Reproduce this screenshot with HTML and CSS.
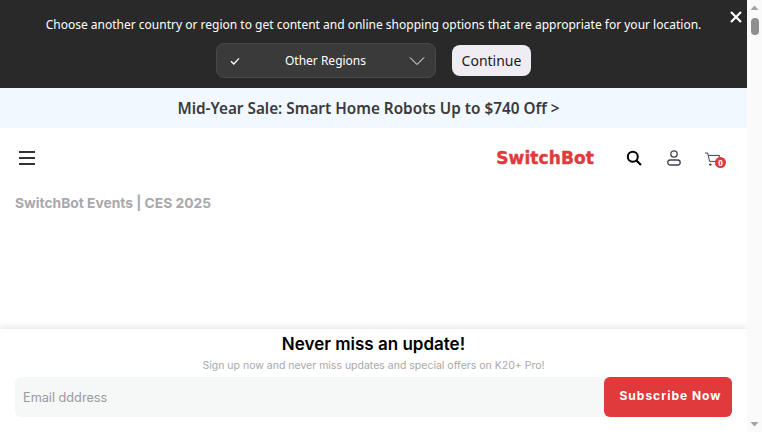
FILE: index.html
```html
<!DOCTYPE html>
<html>
<head>
<title>SwitchBot Events</title>
<link rel="stylesheet" href="styles.css">
</head>
<body>
  <div id="page">
    <div class="region-bar">
      <p class="region-text">Choose another country or region to get content and online shopping options that are appropriate for your location.</p>
      <div class="region-row">
        <div class="region-select">
          <svg class="tick" width="12" height="12" viewBox="0 0 12 12"><path d="M2 6.2l2.8 2.8L10 3.4" fill="none" stroke="#fff" stroke-width="1.3"/></svg>
          <span class="region-name">Other Regions</span>
          <svg class="chev" width="16" height="10" viewBox="0 0 16 10"><path d="M1 1.5l7 7 7-7" fill="none" stroke="#fff" stroke-width="1"/></svg>
        </div>
        <button class="continue">Continue</button>
      </div>
      <svg class="close" width="12" height="12" viewBox="0 0 12 12"><path d="M1 1l10 10M11 1L1 11" stroke="#fff" stroke-width="2.2"/></svg>
    </div>
    <div class="promo">Mid-Year Sale: Smart Home Robots Up to $740 Off &gt;</div>
    <header class="nav">
      <svg class="burger" width="16" height="14" viewBox="0 0 16 14"><path d="M0 1h16M0 7h16M0 13h16" stroke="#333" stroke-width="1.8"/></svg>
      <span class="logo">SwitchBot</span>
      <div class="nav-icons">
        <svg class="search" width="16" height="16" viewBox="0 0 16 16"><circle cx="6.8" cy="6.8" r="5" fill="none" stroke="#000" stroke-width="2"/><path d="M10.5 10.5l4.5 4.5" stroke="#000" stroke-width="2.2"/></svg>
        <svg width="14" height="16" viewBox="0 0 14 16"><circle cx="7" cy="4" r="3.2" fill="none" stroke="#3c4250" stroke-width="1.3"/><rect x="0.8" y="10" width="12.4" height="5" rx="2.5" fill="none" stroke="#3c4250" stroke-width="1.3"/></svg>
        <div class="cart">
          <svg width="16" height="15" viewBox="0 0 16 15"><path d="M0 1h2.6l2 8.4h8.2l1.8-6H3.4" fill="none" stroke="#3c4250" stroke-width="1"/><circle cx="5.4" cy="12.6" r="1.2" fill="#3c4250"/><circle cx="11.6" cy="12.6" r="1.2" fill="#3c4250"/></svg>
          <span class="badge">0</span>
        </div>
      </div>
    </header>
    <h2 class="crumb">SwitchBot Events | CES 2025</h2>
    <div class="signup">
      <h3>Never miss an update!</h3>
      <p>Sign up now and never miss updates and special offers on K20+ Pro!</p>
      <form class="signup-form">
        <input type="text" placeholder="Email dddress">
        <button type="button">Subscribe Now</button>
      </form>
    </div>
  </div>
  <div class="scrollbar">
    <svg width="15" height="15" viewBox="0 0 15 15"><path d="M3.5 10L7.5 5.5l4 4.5z" fill="#a3a3a3"/></svg>
    <div class="thumb"></div>
    <svg class="down" width="15" height="15" viewBox="0 0 15 15"><path d="M3.5 5l4 4.5 4-4.5z" fill="#a3a3a3"/></svg>
  </div>
</body>
</html>
```

FILE: styles.css
```css
* {
  margin: 0;
  padding: 0;
  box-sizing: border-box;
}
html, body {
  overflow: hidden;
}
body {
  display: flex;
  width: 762px;
  height: 432px;
  background: #fff;
  font-family: "Noto Sans", sans-serif;
}
#page {
  position: relative;
  width: 747px;
  height: 432px;
  flex-shrink: 0;
}

.region-bar {
  position: relative;
  height: 88px;
  background: #292929;
  padding-top: 15px;
  display: flex;
  flex-direction: column;
  align-items: center;
  gap: 9px;
}
.region-text {
  color: #fff;
  font-size: 12px;
  line-height: 19px;
  white-space: nowrap;
}
.region-row {
  display: flex;
  align-items: center;
  gap: 16px;
}
.region-select {
  width: 220px;
  height: 35px;
  background: #3a3a3a;
  border: 1px solid #484848;
  border-radius: 8px;
  display: flex;
  align-items: center;
  padding: 0 10px 0 12px;
  color: #fff;
  font-size: 12px;
}
.region-name {
  flex: 1;
  text-align: center;
  padding-left: 1px;
}
.tick {
  flex-shrink: 0;
}
.continue {
  width: 79px;
  height: 31px;
  background: #efedf3;
  border: 0;
  border-radius: 8px;
  color: #1a1a1a;
  font-family: "Noto Sans", sans-serif;
  font-size: 14px;
}
.close {
  position: absolute;
  top: 11px;
  right: 5px;
}

.promo {
  height: 40px;
  background: #f1f8ff;
  color: #3a3a3a;
  font-size: 15.3px;
  font-weight: 650;
  line-height: 41px;
  text-align: center;
  padding-right: 10px;
}

.nav {
  display: flex;
  align-items: center;
  height: 60px;
  padding: 0 21px 0 19px;
}
.burger {
  flex-shrink: 0;
}
.logo {
  margin-left: auto;
  color: #e03a3c;
  font-family: "DejaVu Sans", sans-serif;
  font-weight: 700;
  font-size: 17px;
  letter-spacing: 0.1px;
  -webkit-text-stroke: 0.4px #e03a3c;
}
.nav-icons {
  display: flex;
  align-items: center;
  gap: 24px;
  margin-left: 32px;
}
.search {
  margin-right: 1px;
}
.cart {
  position: relative;
  width: 21px;
  height: 16px;
}
.badge {
  position: absolute;
  top: 7px;
  left: 10px;
  width: 11px;
  height: 11px;
  border-radius: 50%;
  background: #e03a3c;
  color: #fff;
  font-size: 8px;
  font-weight: 700;
  line-height: 11px;
  text-align: center;
}

.crumb {
  padding-left: 15px;
  margin-top: 5px;
  color: #a8a8ad;
  font-family: Inter, sans-serif;
  font-size: 13.8px;
  font-weight: 700;
  line-height: 20px;
}

.signup {
  position: absolute;
  left: 0;
  right: 0;
  bottom: 0;
  height: 103px;
  background: #fff;
  box-shadow: 0 -2px 6px rgba(0, 0, 0, 0.1);
  padding: 4px 15px 0;
  text-align: center;
}
.signup h3 {
  color: #000;
  font-family: Inter, sans-serif;
  font-size: 17px;
  font-weight: 600;
  line-height: 22px;
}
.signup p {
  color: #a9a9a9;
  font-family: Inter, sans-serif;
  font-size: 10.5px;
  line-height: 16px;
  margin-top: 3px;
}
.signup-form {
  display: flex;
  height: 40px;
  margin-top: 3px;
  background: #f6f7f7;
  border-radius: 6px;
}
.signup-form input {
  flex: 1;
  min-width: 0;
  border: 0;
  outline: 0;
  background: transparent;
  padding: 1px 0 0 8px;
  font-family: Inter, sans-serif;
  font-size: 12.7px;
}
.signup-form input::placeholder {
  color: #9a9a9f;
}
.signup-form button {
  width: 128px;
  border: 0;
  border-radius: 6px;
  background: #e03a3c;
  color: #fff;
  font-family: Inter, sans-serif;
  font-size: 12px;
  font-weight: 700;
  letter-spacing: 1px;
  padding: 0 0 4px 5px;
}

.scrollbar {
  width: 15px;
  height: 432px;
  background: #fafafa;
  display: flex;
  flex-direction: column;
  align-items: center;
  position: relative;
}
.thumb {
  width: 8px;
  height: 17px;
  margin-top: 3px;
  background: #8f8f8f;
  border-radius: 4px;
}
.down {
  margin-top: auto;
}
```
